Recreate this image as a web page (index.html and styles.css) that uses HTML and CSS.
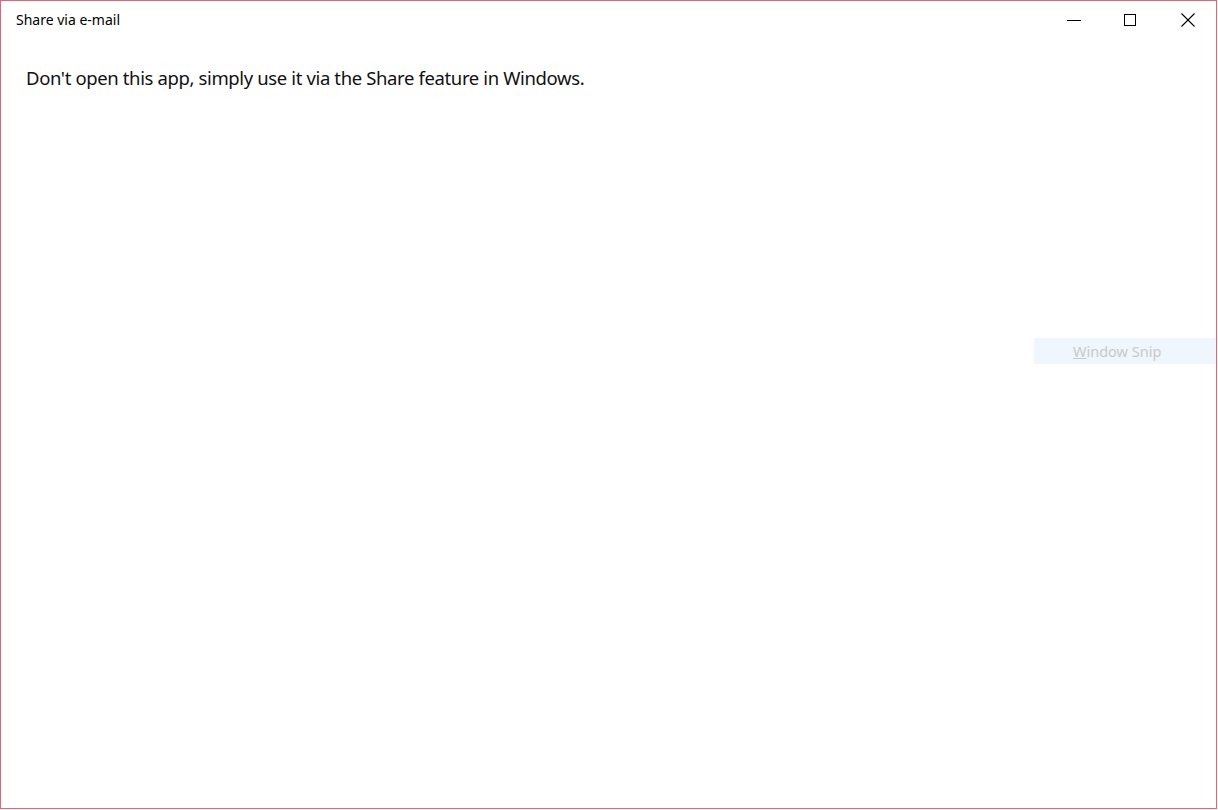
FILE: index.html
```html
<!DOCTYPE html>
<html lang="en">
<head>
<meta charset="utf-8">
<title>Share via e-mail</title>
<link rel="stylesheet" href="styles.css">
</head>
<body>
<div class="window">
  <header class="titlebar">
    <div class="title">Share via e-mail</div>
    <div class="controls">
      <div class="ctl">
        <svg width="14" height="14" viewBox="0 0 14 14"><path d="M0 7.5H14" stroke="#000" stroke-width="1"/></svg>
      </div>
      <div class="ctl">
        <svg width="14" height="14" viewBox="0 0 14 14"><rect x="0.5" y="1.5" width="11" height="11" fill="none" stroke="#000" stroke-width="1"/></svg>
      </div>
      <div class="ctl">
        <svg width="14" height="14" viewBox="0 0 14 14"><path d="M0.5 0.5L13.5 13.5M13.5 0.5L0.5 13.5" stroke="#000" stroke-width="1.1"/></svg>
      </div>
    </div>
  </header>
  <main class="content">
    <p class="message">Don't open this app, simply use it via the Share feature in Windows.</p>
  </main>
  <div class="snip"><span class="u">W</span>indow Snip</div>
</div>
</body>
</html>
```
FILE: styles.css
```css
html, body {
  margin: 0;
  padding: 0;
  background: #fff;
}
.window {
  position: relative;
  width: 1217px;
  height: 809px;
  box-sizing: border-box;
  border: 1px solid #f2606f;
  background: #fff;
  font-family: "Noto Sans", "Open Sans", sans-serif;
  color: #000;
  display: flex;
  flex-direction: column;
}
.titlebar {
  display: flex;
  align-items: flex-start;
  height: 38px;
}
.title {
  flex: 1;
  padding-left: 15px;
  padding-top: 9px;
  font-size: 14px;
  letter-spacing: 0;
  line-height: 20px;
  color: #000;
}
.controls {
  display: flex;
}
.ctl {
  width: 57px;
  height: 38px;
  display: flex;
  align-items: center;
  justify-content: center;
  padding-bottom: 1px;
  box-sizing: border-box;
}
.content {
  flex: 1;
  padding: 0 25px;
}
.message {
  margin: 26px 0 0 0;
  font-size: 18.5px;
  letter-spacing: -0.37px;
  line-height: 26px;
  color: #111;
}
.snip {
  position: absolute;
  left: 1033px;
  top: 337px;
  width: 182px;
  height: 26px;
  background: #eff6fd;
  color: #c9c9c9;
  font-size: 14.5px;
  line-height: 26px;
  padding-left: 39px;
  box-sizing: border-box;
}
.u {
  text-decoration: underline;
}
```
